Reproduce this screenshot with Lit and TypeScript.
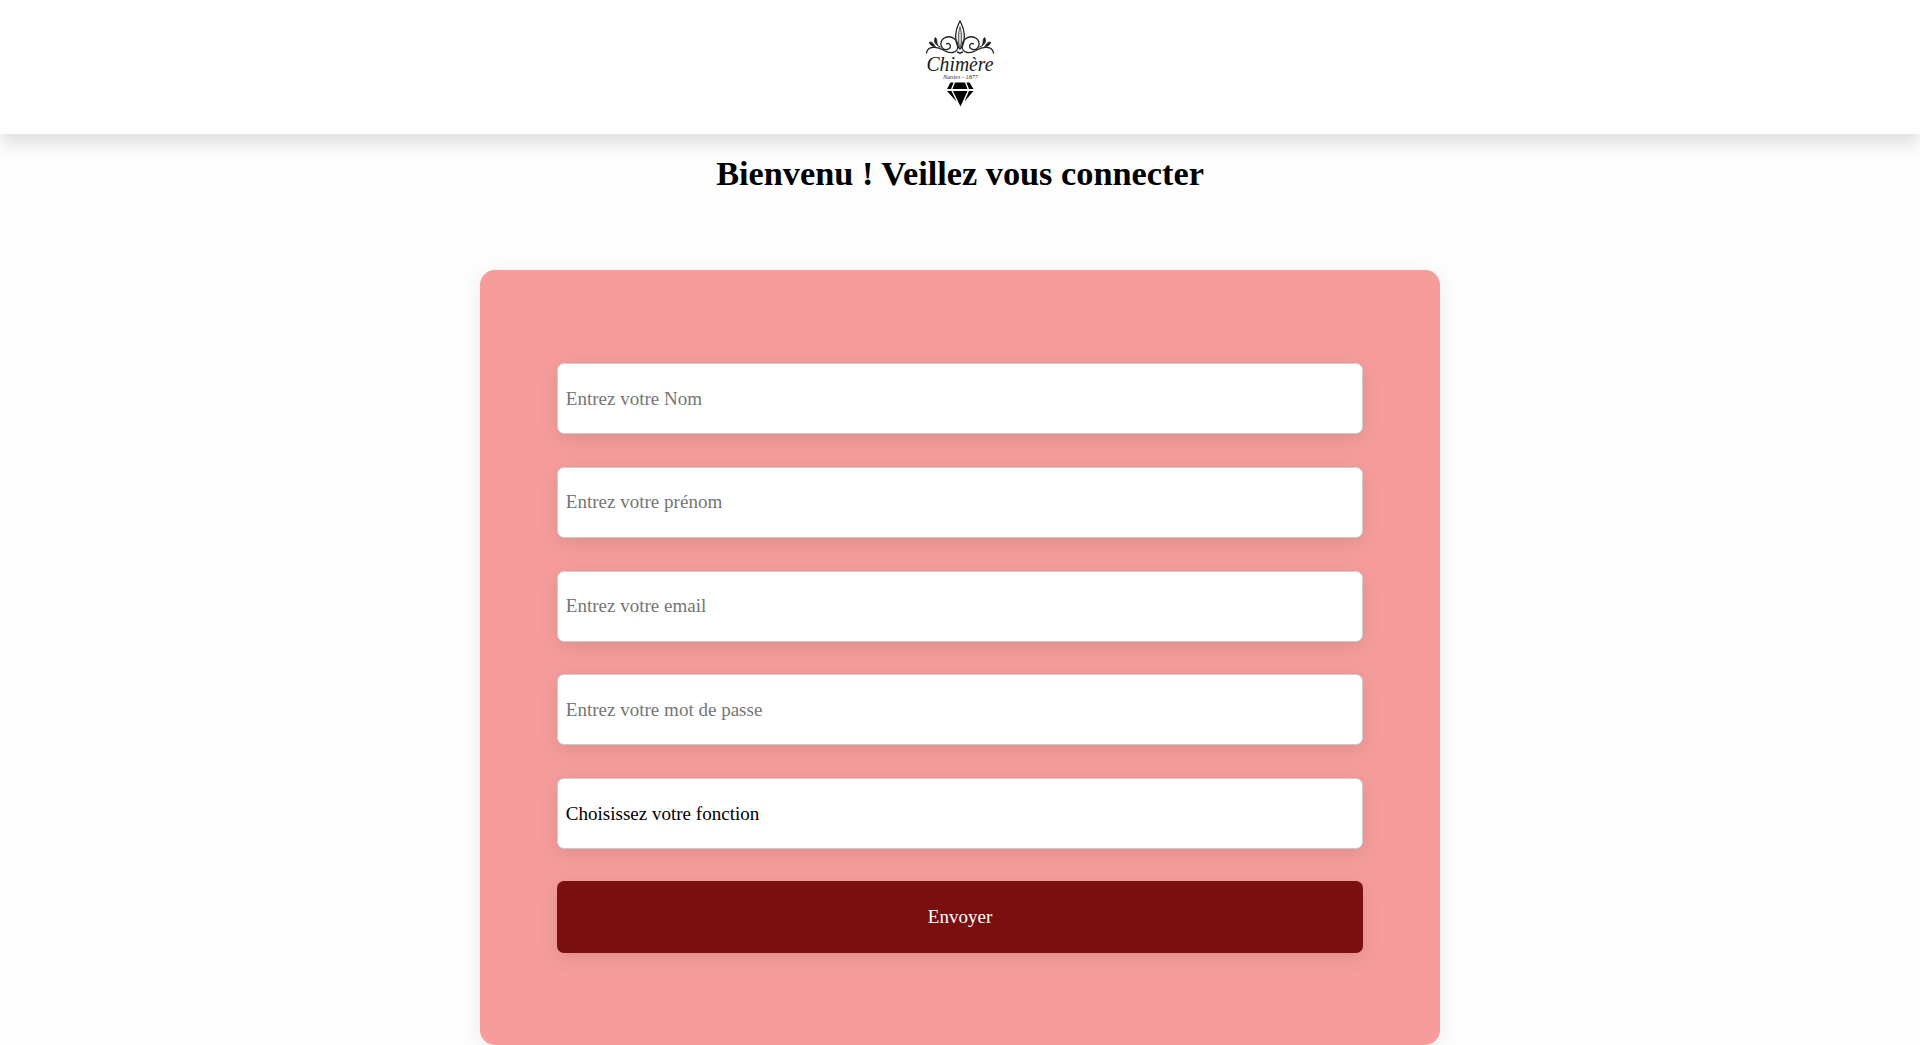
import { LitElement, html, css, svg } from "lit";
import { customElement } from "lit/decorators.js";

const curls = svg`
  <path d="M33 28.500 C33.500 19 24 15.500 18.500 19.500 C13.500 24 16.500 31.500 22 30.500 C27 29.500 26 23 21.500 24.800" />
  <path d="M33 28 C32 34.500 25 35 19 31.500 C12 27 2.500 27 1.500 34" />
  <path d="M15 28 C10 26 13.500 22 10.500 18.500 C8 21.500 10 26 15 28Z" fill="#222" stroke-width=".8" />
  <path d="M10 27.500 C9 25 7.500 23 4.500 23 C4.500 26 7 27.500 10 27.500Z" fill="#222" stroke-width=".8" />
`;

@customElement("app-root")
export class AppRoot extends LitElement {
  static styles = css`
    :host {
      display: block;
      height: 1045px;
      overflow: hidden;
      background: #fdfdfd;
      font-family: "Liberation Serif", "Times New Roman", serif;
    }
    * { box-sizing: border-box; }
    .header {
      height: 134px;
      padding-top: 19px;
      display: flex;
      justify-content: center;
      align-items: flex-start;
      background: #fff;
      box-shadow: 0 10px 15px rgba(0, 0, 0, 0.115);
    }
    .logo { display: block; width: 70px; height: 90px; overflow: visible; }
    .name { font: italic 20px "Liberation Serif", serif; fill: #181818; }
    .place { font: italic 6px "Liberation Serif", serif; fill: #333; }
    .title {
      margin: 21px 0 0;
      text-align: center;
      font-size: 34.300px;
      line-height: 37px;
      font-weight: bold;
      color: #000;
    }
    .card {
      width: 960px;
      height: 775px;
      margin: 78px auto 0;
      padding: 93px 76.800px 0;
      display: flex;
      flex-direction: column;
      gap: 32.750px;
      background: #f69d9c;
      border-radius: 15px;
      box-shadow: 0 5px 20px rgba(0, 0, 0, 0.08);
    }
    .field, .send {
      display: block;
      flex: none;
      width: 100%;
      height: 71px;
      margin: 0;
      font-family: inherit;
      font-size: 19.050px;
      border-radius: 7px;
      box-shadow: 0 5px 20px rgba(0, 0, 0, 0.1);
      appearance: none;
      outline: none;
    }
    .field {
      padding: 0 8px;
      border: 1px solid #ccc;
      background: #fff;
      color: #000;
    }
    .field::placeholder { color: #757575; opacity: 1; }
    .send {
      height: 72px;
      margin-top: -1px;
      padding: 0;
      border: 0;
      background: #7a0f0f;
      color: #fff;
    }
  `;

  render() {
    return html`
      <header class="header">
        <svg class="logo" viewBox="0 0 70 90" role="img" aria-label="Chimère">
          <g fill="none" stroke="#222" stroke-width="1.300" stroke-linecap="round">
            ${curls}
            <g transform="translate(70 0) scale(-1 1)">${curls}</g>
            <path d="M35 2 C28.500 14 30 25 35 30 C40 25 41.500 14 35 2Z" />
            <path d="M35 8 C32.500 16 33 24 35 28 C37 24 37.500 16 35 8Z" fill="#ccc" stroke-width=".7" />
            <path d="M32.500 33 Q35 35 37.500 33" stroke-width="1.600" />
          </g>
          <text class="name" x="1.500" y="51.500" textLength="67" lengthAdjust="spacingAndGlyphs">Chimère</text>
          <text class="place" x="18" y="59.500" textLength="35" lengthAdjust="spacingAndGlyphs">Nantes - 1877</text>
          <g fill="#000">
            <path d="M25.500 63.500 L28.500 63.500 L26 70 L22 70Z" />
            <path d="M30 63.500 L40 63.500 L42.500 70 L27.500 70Z" />
            <path d="M41.500 63.500 L44.500 63.500 L48.500 70 L44 70Z" />
            <path d="M22 72 L26.500 72 L31.500 82.500Z" />
            <path d="M28 72 L42.500 72 L35.500 87.500Z" />
            <path d="M44 72 L48.500 72 L39.500 82.500Z" />
          </g>
        </svg>
      </header>
      <h1 class="title">Bienvenu ! Veillez vous connecter</h1>
      <form class="card" @submit=${(e: Event) => e.preventDefault()}>
        <input class="field" type="text" placeholder="Entrez votre Nom" />
        <input class="field" type="text" placeholder="Entrez votre prénom" />
        <input class="field" type="email" placeholder="Entrez votre email" />
        <input class="field" type="password" placeholder="Entrez votre mot de passe" />
        <select class="field">
          <option>Choisissez votre fonction</option>
        </select>
        <button class="send" type="submit">Envoyer</button>
      </form>
    `;
  }
}
